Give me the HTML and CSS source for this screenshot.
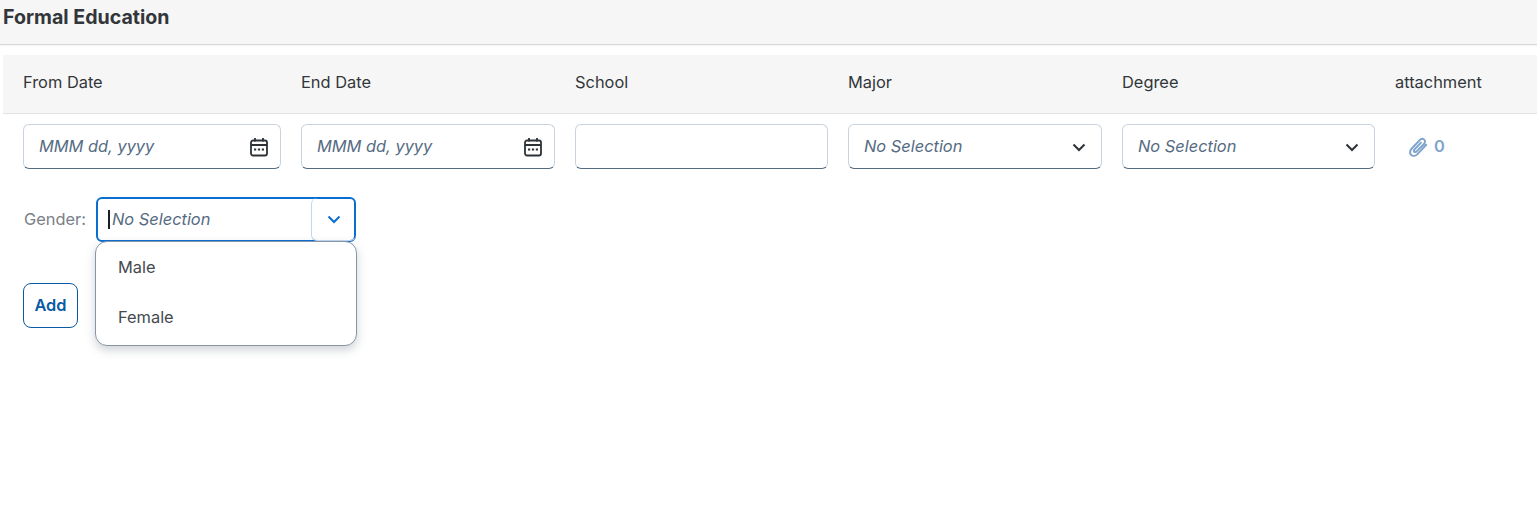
FILE: index.html
```html
<!DOCTYPE html>
<html lang="en">
<head>
<meta charset="utf-8">
<title>Formal Education</title>
<link rel="stylesheet" href="styles.css">
</head>
<body>
<svg class="sprites" width="0" height="0" aria-hidden="true">
  <symbol id="cal" viewBox="0 0 20 20">
    <path d="M2 5.500a2 2 0 0 1 2-2h12a2 2 0 0 1 2 2v11a2 2 0 0 1-2 2H4a2 2 0 0 1-2-2z" fill="none" stroke="currentColor" stroke-width="1.800"/>
    <path d="M2 8h16M6 1v3.500M14 1v3.500" fill="none" stroke="currentColor" stroke-width="1.800"/>
    <path d="M5 11.500h2.200v2H5zM8.900 11.500h2.200v2H8.900zM12.800 11.500h2.200v2h-2.200z" fill="currentColor"/>
  </symbol>
  <symbol id="chev" viewBox="0 0 14 14">
    <path d="M1.500 4.500 7 10l5.500-5.500" fill="none" stroke="currentColor" stroke-width="2"/>
  </symbol>
</svg>
<header class="section-head"><h1 class="section-title">Formal Education</h1></header>
<div class="table">
  <div class="row head-row">
    <div class="cell">From Date</div>
    <div class="cell">End Date</div>
    <div class="cell">School</div>
    <div class="cell">Major</div>
    <div class="cell">Degree</div>
    <div class="cell">attachment</div>
  </div>
  <div class="row body-row">
    <div class="cell"><div class="field"><span class="ph">MMM dd, yyyy</span><svg class="ico-cal"><use href="#cal"/></svg></div></div>
    <div class="cell"><div class="field"><span class="ph">MMM dd, yyyy</span><svg class="ico-cal"><use href="#cal"/></svg></div></div>
    <div class="cell"><div class="field"></div></div>
    <div class="cell"><div class="field select"><span class="ph">No Selection</span><svg class="ico-chev"><use href="#chev"/></svg></div></div>
    <div class="cell"><div class="field select"><span class="ph">No Selection</span><svg class="ico-chev"><use href="#chev"/></svg></div></div>
    <div class="cell attach">
      <svg class="ico-clip" viewBox="0 0 20 20"><path d="M17.500 8 9.500 16.500c-1.700 1.800-4.200 2-5.700.7s-1.300-3.800.4-5.600l7.300-7.800c1.200-1.300 3-1.500 4.100-.5s1 2.700-.2 4L8.700 14c-.7.700-1.600.8-2.100.3s-.4-1.400.3-2.100l5.800-6.200" fill="none" stroke="currentColor" stroke-width="1.800" stroke-linecap="round"/></svg>
      <span class="count">0</span>
    </div>
  </div>
</div>
<div class="gender-row">
  <span class="gender-label">Gender:</span>
  <div class="combo">
    <span class="caret"></span><span class="ph combo-ph">No Selection</span>
    <span class="combo-btn"><svg class="ico-chev-blue"><use href="#chev"/></svg></span>
    <ul class="menu">
      <li class="menu-item">Male</li>
      <li class="menu-item">Female</li>
    </ul>
  </div>
</div>
<button class="add" type="button">Add</button>
</body>
</html>
```
FILE: styles.css
```css
* { box-sizing: border-box; }
html, body { margin: 0; padding: 0; }
body {
  height: 516px;
  overflow: hidden;
  background: #fff;
  color: #32363a;
  font-family: Inter, "Noto Sans", "Liberation Sans", sans-serif;
  font-size: 16.4px;
}
.sprites { display: block; height: 0; }
.section-head {
  height: 45px;
  background: #f6f6f6;
  border-bottom: 1px solid #d9d9d9;
  box-shadow: 0 1px 2px rgba(0,0,0,.06);
  padding: 5px 0 0 3px;
}
.section-title {
  margin: 0;
  font-size: 19.6px;
  line-height: 24px;
  font-weight: 700;
  color: #32363a;
}
.table { margin: 10px 0 0 3px; }
.row {
  display: grid;
  grid-template-columns: 278px 274px 273px 274px 273px 162px;
}
.head-row {
  height: 59px;
  background: #f6f6f6;
  border-bottom: 1px solid #e4e4e4;
  align-items: center;
}
.head-row .cell { line-height: 20px; padding-bottom: 5px; }
.cell { padding-left: 20px; }
.body-row { padding-top: 10px; }
.field {
  height: 45px;
  display: flex;
  align-items: center;
  justify-content: space-between;
  background: #fff;
  border: 1px solid #c9d3de;
  border-bottom-color: #556b82;
  border-radius: 6px;
  padding: 0 11px 0 15px;
}
.field.select { padding-right: 15px; }
.ph {
  font-style: italic;
  color: #556b82;
  font-size: 16.4px;
  line-height: 22px;
  margin-bottom: 2px;
}
.ico-cal { width: 20px; height: 20px; color: #2d3237; }
.ico-chev { width: 14px; height: 14px; color: #2d3237; }
.attach { display: flex; align-items: center; gap: 5px; height: 45px; padding-left: 32px; }
.ico-clip { width: 22px; height: 22px; color: #7ea4cc; }
.count { color: #7ea4cc; font-weight: 600; font-size: 16.4px; margin-bottom: 2px; }
.gender-row {
  display: flex;
  align-items: center;
  margin: 28px 0 0 24px;
  height: 45px;
}
.gender-label { width: 72px; color: #7a8086; padding-bottom: 2px; }
.combo {
  position: relative;
  width: 260px;
  height: 45px;
  display: flex;
  align-items: center;
  border: 2px solid #0a6ed1;
  border-radius: 6px;
  padding-left: 10px;
}
.caret { width: 2px; height: 19px; background: #15202b; margin-right: 2px; flex: none; }
.combo-ph { flex: 1; }
.combo-btn {
  width: 45px;
  height: 43px;
  margin: -1px -2px -1px 0;
  flex: none;
  display: flex;
  align-items: center;
  justify-content: center;
  border-left: 1px solid #c4d7ee;
  border-bottom: 1px solid #c4d7ee;
  border-radius: 6px;
}
.ico-chev-blue { width: 14px; height: 14px; color: #0a6ed1; }
.menu {
  position: absolute;
  left: -3px;
  top: 42px;
  width: 262px;
  height: 105px;
  margin: 0;
  padding: 0;
  list-style: none;
  background: #fff;
  border: 1px solid #8796a6;
  border-radius: 12px;
  box-shadow: 0 4px 10px rgba(60,75,95,.25);
  z-index: 2;
}
.menu-item { height: 50px; line-height: 50px; padding-left: 22px; color: #444a50; }
.add {
  display: block;
  margin: 41px 0 0 23px;
  width: 55px;
  height: 45px;
  background: #fff;
  border: 1px solid #0b5aa5;
  border-radius: 8px;
  color: #0b5aa5;
  font: 600 16.4px Inter, "Noto Sans", "Liberation Sans", sans-serif;
  padding: 0 0 2px;
}
```
